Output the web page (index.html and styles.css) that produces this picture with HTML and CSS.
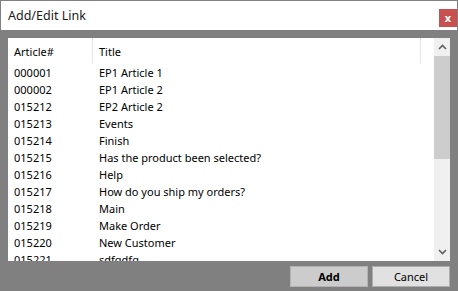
FILE: index.html
```html
<!DOCTYPE html>
<html lang="en">
<head>
  <meta charset="UTF-8">
  <title>Add/Edit Link</title>
  <link rel="stylesheet" href="styles.css">
</head>
<body>
  <div class="dialog">
    <div class="titlebar">
      <span class="title">Add/Edit Link</span>
      <button class="close">x</button>
    </div>
    <div class="content">
      <div class="list">
        <div class="grid">
          <div class="head">
            <div class="c1">Article#</div>
            <div class="c2">Title</div>
            <div class="c3"></div>
          </div>
          <div class="row"><div class="c1">000001</div><div class="c2">EP1 Article 1</div></div>
          <div class="row"><div class="c1">000002</div><div class="c2">EP1 Article 2</div></div>
          <div class="row"><div class="c1">015212</div><div class="c2">EP2 Article 2</div></div>
          <div class="row"><div class="c1">015213</div><div class="c2">Events</div></div>
          <div class="row"><div class="c1">015214</div><div class="c2">Finish</div></div>
          <div class="row"><div class="c1">015215</div><div class="c2">Has the product been selected?</div></div>
          <div class="row"><div class="c1">015216</div><div class="c2">Help</div></div>
          <div class="row"><div class="c1">015217</div><div class="c2">How do you ship my orders?</div></div>
          <div class="row"><div class="c1">015218</div><div class="c2">Main</div></div>
          <div class="row"><div class="c1">015219</div><div class="c2">Make Order</div></div>
          <div class="row"><div class="c1">015220</div><div class="c2">New Customer</div></div>
          <div class="row"><div class="c1">015221</div><div class="c2">sdfgdfg</div></div>
        </div>
        <div class="scrollbar">
          <div class="arrow">
            <svg width="9" height="6" viewBox="0 0 9 6"><path d="M1 5 L4.5 1.5 L8 5" fill="none" stroke="#606060" stroke-width="1.6"/></svg>
          </div>
          <div class="thumb"></div>
          <div class="track"></div>
          <div class="arrow">
            <svg width="9" height="6" viewBox="0 0 9 6"><path d="M1 1 L4.5 4.5 L8 1" fill="none" stroke="#606060" stroke-width="1.6"/></svg>
          </div>
        </div>
      </div>
      <div class="buttons">
        <button class="btn default">Add</button>
        <button class="btn">Cancel</button>
      </div>
    </div>
  </div>
</body>
</html>
```

FILE: styles.css
```css
html, body {
  margin: 0;
  height: 100%;
}
body {
  background: #808080;
  font-family: "Noto Sans", "Liberation Sans", sans-serif;
  font-size: 11px;
  color: #000;
  overflow: hidden;
}
.dialog {
  height: 100%;
  display: flex;
  flex-direction: column;
}
.titlebar {
  margin: 1px 1px 0 1px;
  height: 29px;
  flex-shrink: 0;
  background: #fff;
  display: flex;
  align-items: center;
  justify-content: space-between;
  padding-left: 7px;
}
.title {
  font-size: 12.5px;
  color: #1a1a1a;
}
.close {
  align-self: flex-start;
  margin-top: 8px;
  width: 18px;
  height: 18px;
  background: #c75050;
  color: #fff;
  border: none;
  padding: 0;
  font-family: "Noto Sans", sans-serif;
  font-size: 11px;
  font-weight: bold;
  line-height: 16px;
}
.content {
  flex: 1;
  padding: 8px 8px 0 8px;
  display: flex;
  flex-direction: column;
}
.list {
  height: 223px;
  flex-shrink: 0;
  background: #fff;
  display: flex;
  overflow: hidden;
}
.grid {
  flex: 1;
  display: flex;
  flex-direction: column;
}
.head, .row {
  flex-shrink: 0;
  display: grid;
  grid-template-columns: 84px 328px 14px;
}
.head {
  height: 25px;
}
.head > div {
  display: flex;
  align-items: center;
}
.head .c2, .head .c3 {
  border-left: 1px solid #e5e5e5;
}
.row {
  height: 17px;
  align-items: center;
}
.c1 {
  padding-left: 6px;
}
.c2 {
  padding-left: 6px;
}
.row .c2 {
  padding-left: 7px;
}
.head .c1, .head .c2 {
  padding-top: 1px;
}
.head + .row {
  margin-top: 1px;
}
.scrollbar {
  width: 16px;
  background: #f0f0f0;
  display: flex;
  flex-direction: column;
}
.arrow {
  height: 18px;
  flex-shrink: 0;
  display: flex;
  align-items: center;
  justify-content: center;
}
.thumb {
  height: 103px;
  flex-shrink: 0;
  background: #cdcdcd;
}
.track {
  flex: 1;
}
.buttons {
  display: flex;
  justify-content: flex-end;
  gap: 4px;
  margin-top: 5px;
}
.btn {
  width: 78px;
  height: 21px;
  background: #e1e1e1;
  border: 1px solid #adadad;
  font-family: "Noto Sans", sans-serif;
  font-size: 11px;
  color: #000;
  padding: 0;
}
.btn.default {
  background: #cccccc;
  border-color: #b3b3b3;
  font-weight: bold;
}
```
